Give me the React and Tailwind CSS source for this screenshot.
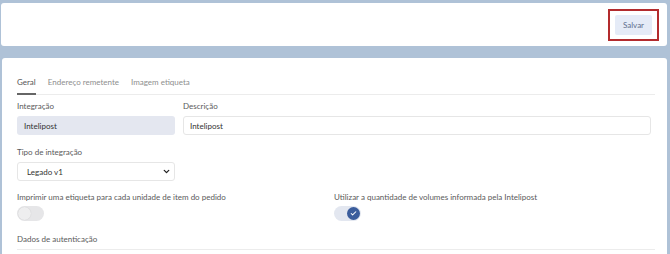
import React from 'react';
import { ChevronDown, Check } from 'lucide-react';

const Toggle = ({ on }) => (
  <div
    className={`w-[27px] h-[15px] rounded-full flex items-center px-[1px] ${
      on ? 'bg-[#e3e7f0] justify-end' : 'bg-[#e6e6e8] justify-start'
    }`}
  >
    <div
      className={`w-[13px] h-[13px] rounded-full flex items-center justify-center ${
        on ? 'bg-[#3b5d9c]' : 'bg-[#eeeeef] shadow-[0_0_1px_rgba(0,0,0,0.15)]'
      }`}
    >
      {on && <Check className="w-[7px] h-[7px] text-white" strokeWidth={3.5} />}
    </div>
  </div>
);

const App = () => {
  return (
    <div className="w-[670px] h-[254px] overflow-hidden bg-[#afc2d7] pt-[3px] pl-[1px] pr-[3px] text-[8px] text-[#3c3c3c]" style={{ fontFamily: 'Lato, "Open Sans", sans-serif' }}>
      <div className="h-[43px] bg-white rounded-[3px] flex items-center justify-end pr-[8px]">
        <div className="border-[2px] border-[#b32b2d] px-[5px] py-[4px]">
          <button className="w-[37px] h-[20px] bg-[#e5ebf7] rounded-[2px] text-[8px] text-[#5d6d8c]">
            Salvar
          </button>
        </div>
      </div>

      <div className="mt-[12px] ml-[1px] bg-white rounded-t-[3px] h-[200px] pl-[15px] pr-[16px] pt-[18px]">
        <div className="flex gap-[12px] border-b border-[#ececec] mr-[-4px] text-[#8e8e8e]">
          <div className="pb-[5px] border-b-2 border-[#666] text-[#555] -mb-px">Geral</div>
          <div>Endereço remetente</div>
          <div>Imagem etiqueta</div>
        </div>

        <div className="flex gap-[8px] mt-[5px]">
          <div className="w-[158px]">
            <div className="h-[12px] leading-[12px] text-[#5a5a5a]">Integração</div>
            <div className="mt-[4px] h-[19px] bg-[#e4e7f0] rounded-[3px] flex items-center pl-[7px] text-[#333]">
              Intelipost
            </div>
          </div>
          <div className="flex-1">
            <div className="h-[12px] leading-[12px] text-[#5a5a5a]">Descrição</div>
            <div className="mt-[4px] h-[19px] border border-[#e6e6e6] rounded-[3px] flex items-center pl-[6px] text-[#333]">
              Intelipost
            </div>
          </div>
        </div>

        <div className="mt-[11px] w-[158px]">
          <div className="h-[12px] leading-[12px] text-[#5a5a5a]">Tipo de integração</div>
          <div className="mt-[4px] h-[19px] border border-[#e6e6e6] rounded-[3px] flex items-center justify-between pl-[9px] pr-[3px] text-[#333]">
            <span>Legado v1</span>
            <ChevronDown className="w-[9px] h-[9px] text-[#222]" strokeWidth={3.5} />
          </div>
        </div>

        <div className="grid grid-cols-2 mt-[10px]">
          <div>
            <div className="h-[12px] leading-[12px] text-[#5a5a5a]">Imprimir uma etiqueta para cada unidade de item do pedido</div>
            <div className="mt-[3px]">
              <Toggle on={false} />
            </div>
          </div>
          <div>
            <div className="h-[12px] leading-[12px] text-[#5a5a5a]">Utilizar a quantidade de volumes informada pela Intelipost</div>
            <div className="mt-[3px]">
              <Toggle on={true} />
            </div>
          </div>
        </div>

        <div className="mt-[12px] h-[12px] leading-[12px] text-[#5a5a5a] border-b border-[#ececec] pb-[4px] box-content mr-[-4px]">
          Dados de autenticação
        </div>
      </div>
    </div>
  );
};

export default App;
